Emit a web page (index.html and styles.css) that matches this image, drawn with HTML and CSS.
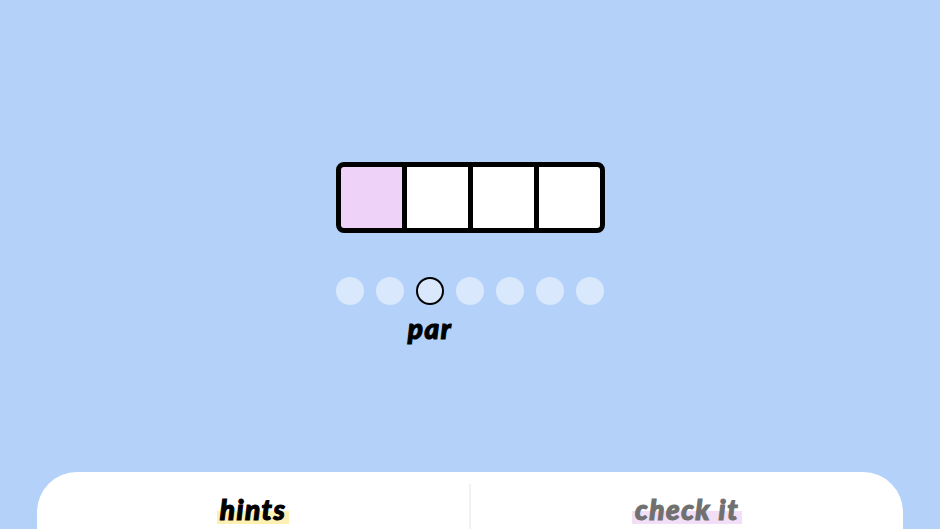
FILE: index.html
```html
<!DOCTYPE html>
<html>
<head>
<meta charset="utf-8">
<link rel="stylesheet" href="styles.css">
</head>
<body>
<main class="stage">
  <div class="board">
    <div class="cell cell-active"></div>
    <div class="cell"></div>
    <div class="cell"></div>
    <div class="cell"></div>
  </div>
  <div class="dots">
    <div class="dot-col"><span class="dot"></span></div>
    <div class="dot-col"><span class="dot"></span></div>
    <div class="dot-col"><span class="dot dot-current"></span><span class="par">par</span></div>
    <div class="dot-col"><span class="dot"></span></div>
    <div class="dot-col"><span class="dot"></span></div>
    <div class="dot-col"><span class="dot"></span></div>
    <div class="dot-col"><span class="dot"></span></div>
  </div>
</main>
<footer class="panel">
  <div class="panel-half">
    <span class="label label-hints">hints</span>
  </div>
  <div class="panel-divider"></div>
  <div class="panel-half">
    <span class="label label-check">check it</span>
  </div>
</footer>
</body>
</html>
```
FILE: styles.css
```css
html, body {
  margin: 0;
  padding: 0;
}
body {
  width: 940px;
  height: 529px;
  overflow: hidden;
  background: #b3d1f9;
  font-family: "Lato", "Open Sans", "Liberation Sans", sans-serif;
  display: flex;
  flex-direction: column;
}
.stage {
  height: 472px;
  display: flex;
  flex-direction: column;
  align-items: center;
  padding-top: 162px;
  box-sizing: border-box;
}
.board {
  display: flex;
  gap: 5px;
  background: #000;
  border: 5px solid #000;
  border-radius: 8px;
}
.cell {
  width: 61px;
  height: 61px;
  background: #fff;
}
.cell:first-child { border-radius: 3px 0 0 3px; }
.cell:last-child { border-radius: 0 3px 3px 0; }
.cell-active {
  background: #efd2f8;
}
.dots {
  display: flex;
  gap: 12px;
  margin-top: 44px;
}
.dot-col {
  width: 28px;
  display: flex;
  flex-direction: column;
  align-items: center;
  position: relative;
}
.dot {
  width: 28px;
  height: 28px;
  border-radius: 50%;
  background: #d9e8fc;
  box-sizing: border-box;
}
.dot-current {
  border: 2.5px solid #000;
}
.par {
  position: absolute;
  top: 36px;
  left: 50%;
  transform: translateX(-50%);
  font-weight: 900;
  font-style: italic;
  font-size: 28px;
  line-height: 30px;
  color: #000;
  -webkit-text-stroke: 1.1px #000;
  letter-spacing: 1.5px;
}
.panel {
  flex: 1;
  margin: 0 37px;
  background: #fff;
  border-radius: 40px 40px 0 0;
  display: flex;
  align-items: flex-start;
}
.panel-half {
  flex: 1;
  display: flex;
  justify-content: center;
  padding-top: 22px;
}
.panel-divider {
  width: 2px;
  align-self: stretch;
  margin-top: 12px;
  background: #f2f2f2;
}
.label {
  font-weight: 900;
  font-style: italic;
  font-size: 28px;
  line-height: 30px;
  padding: 0 3px;
  letter-spacing: 1.5px;
}
.label-hints {
  color: #000;
  -webkit-text-stroke: 1.1px #000;
  background: linear-gradient(to bottom, transparent 58%, #fcf0b3 58%);
}
.label-check {
  color: #707070;
  -webkit-text-stroke: 1.1px #707070;
  background: linear-gradient(to bottom, transparent 58%, #f2def6 58%);
}
```
